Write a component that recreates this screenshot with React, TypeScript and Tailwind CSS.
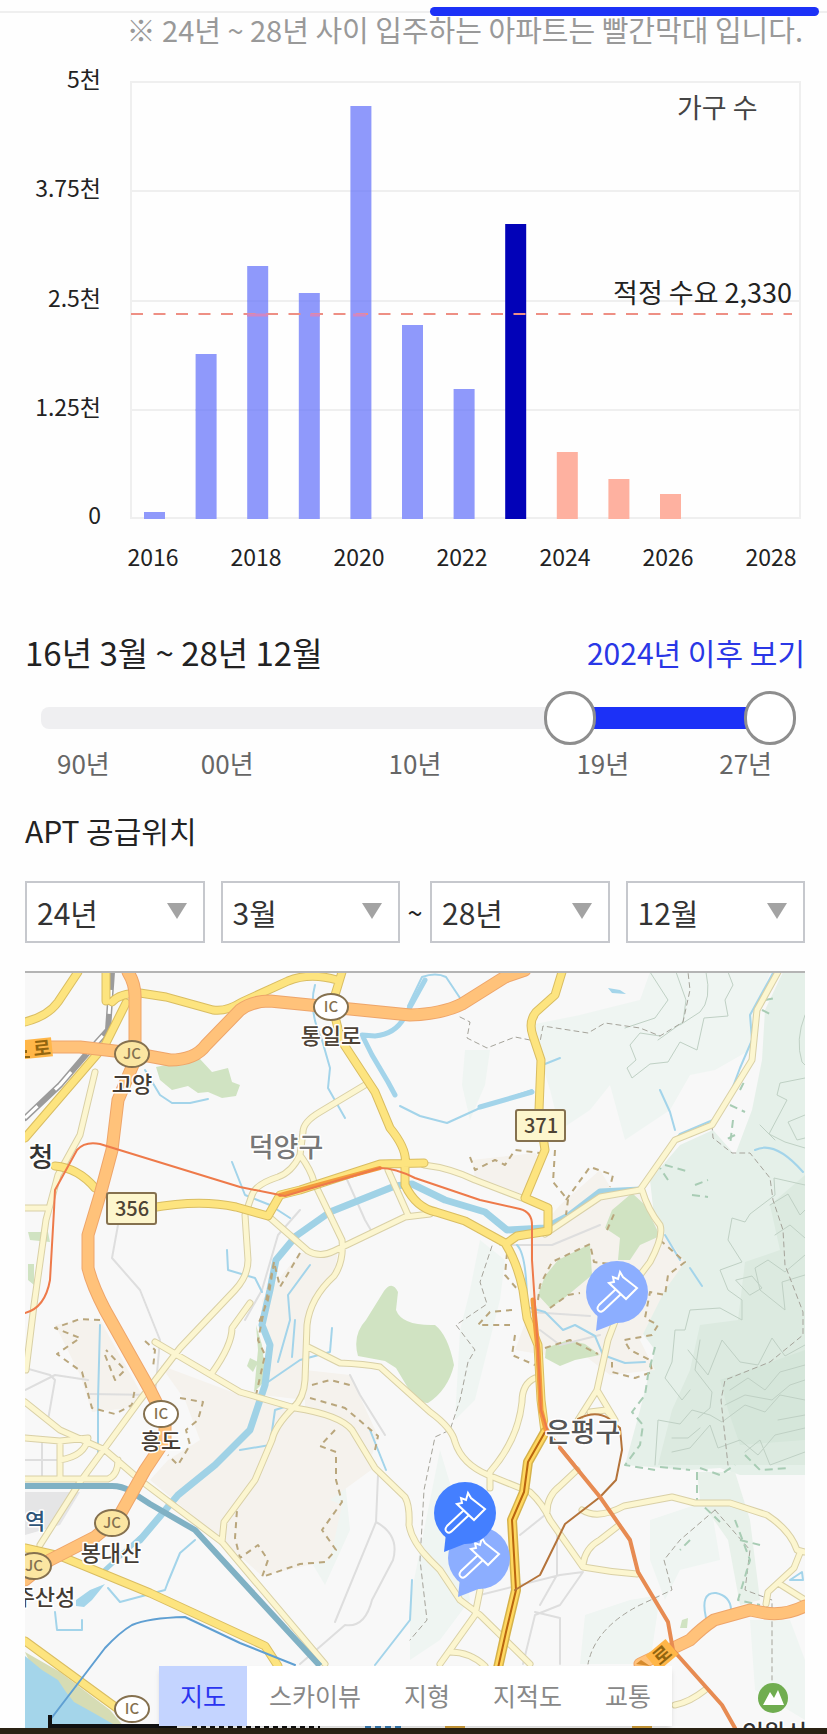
import { useState } from "react";

const bars = [
  { year: 2016, top: 512, fill: "#8f99fb" },
  { year: 2017, top: 354, fill: "#8f99fb" },
  { year: 2018, top: 266, fill: "#8f99fb" },
  { year: 2019, top: 293, fill: "#8f99fb" },
  { year: 2020, top: 106, fill: "#8f99fb" },
  { year: 2021, top: 325, fill: "#8f99fb" },
  { year: 2022, top: 389, fill: "#8f99fb" },
  { year: 2023, top: 224, fill: "#0202b8" },
  { year: 2024, top: 452, fill: "#feb1a0" },
  { year: 2025, top: 479, fill: "#feb1a0" },
  { year: 2026, top: 494, fill: "#feb1a0" },
];

const yTicks = [
  { y: 82, label: "5천" },
  { y: 191, label: "3.75천" },
  { y: 301, label: "2.5천" },
  { y: 410, label: "1.25천" },
  { y: 518, label: "0" },
];

const xTicks = [2016, 2018, 2020, 2022, 2024, 2026, 2028];

function SupplyChart() {
  return (
    <svg viewBox="0 46 827 582" className="block w-full h-auto" role="img" aria-label="가구 수">
      <rect x="131" y="82" width="669" height="436" fill="none" stroke="#efefef" strokeWidth="2" />
      {yTicks.map((t) => (
        <g key={t.label}>
          <line x1="131" x2="800" y1={t.y} y2={t.y} stroke="#efefef" strokeWidth="2" />
          <text x="101" y={t.y + 6} textAnchor="end" fontSize="23" fill="#222">
            {t.label}
          </text>
        </g>
      ))}
      {bars.map((b, i) => (
        <rect key={b.year} x={144 + i * 51.6} y={b.top} width="21" height={519 - b.top} fill={b.fill} />
      ))}
      {/* grid shows faintly through the light bars */}
      <g stroke="#7d88ea" strokeWidth="1" opacity="0.4">
        <path d="M351 191h20M247 301h21M299 301h21M351 301h20M195 410h22M247 410h21M299 410h21M351 410h20M403 410h20M454 410h21" />
      </g>
      <line x1="131" x2="792" y1="314" y2="314" stroke="#ee8f84" strokeWidth="2" strokeDasharray="12 10.5" />
      <path d="M247 315H268M310 315H320M353 315H366" stroke="#cf86c6" strokeWidth="3" />
      <text x="677" y="118" fontSize="27" fill="#444">
        가구 수
      </text>
      <text x="792" y="303" textAnchor="end" fontSize="27" fill="#222">
        적정 수요 2,330
      </text>
      {xTicks.map((year, i) => (
        <text key={year} x={153 + i * 103} y="566" textAnchor="middle" fontSize="23" fill="#222">
          {year}
        </text>
      ))}
    </svg>
  );
}

const thumb =
  "pointer-events-none absolute inset-0 m-0 h-[54px] w-full appearance-none bg-transparent [&::-webkit-slider-thumb]:pointer-events-auto [&::-webkit-slider-thumb]:h-[54px] [&::-webkit-slider-thumb]:w-[52px] [&::-webkit-slider-thumb]:appearance-none [&::-webkit-slider-thumb]:rounded-full [&::-webkit-slider-thumb]:border-3 [&::-webkit-slider-thumb]:border-[#8e8e8e] [&::-webkit-slider-thumb]:bg-white";

function YearRange() {
  const [from, setFrom] = useState(143);
  const [to, setTo] = useState(200);

  return (
    <div className="pl-4 pr-[9px]">
      <div className="relative flex h-[54px] items-center">
        <div className="h-[22px] w-full overflow-hidden rounded-lg bg-[#efeff1] px-[26px]">
          <div
            className="h-full bg-[#1c31f7]"
            style={{ marginLeft: `${from / 2}%`, width: `${(to - from) / 2}%` }}
          />
        </div>
        <input type="range" aria-label="시작" min={0} max={200} value={from} onChange={(e) => setFrom(Number(e.target.value))} className={thumb} />
        <input type="range" aria-label="끝" min={0} max={200} value={to} onChange={(e) => setTo(Number(e.target.value))} className={thumb} />
      </div>
      <div className="grid grid-cols-[144fr_188fr_188fr_143fr_auto] pl-4 pr-6 text-[26px] leading-9 text-[#666]">
        <span>90년</span>
        <span>00년</span>
        <span>10년</span>
        <span>19년</span>
        <span>27년</span>
      </div>
    </div>
  );
}

function Picker({ label, value, options }: { label: string; value: string; options: string[] }) {
  return (
    <div className="relative min-w-0 flex-1">
      <select
        aria-label={label}
        defaultValue={value}
        className="h-[62px] w-full appearance-none border-2 border-[#c6c8cd] bg-white pl-[10px] text-[30px] text-[#333]"
      >
        {options.map((o) => (
          <option key={o}>{o}</option>
        ))}
      </select>
      <svg viewBox="0 0 20 16" className="pointer-events-none absolute right-[18px] top-[22px] h-4 w-5">
        <path d="M0 0H20L10 16Z" fill="#a3a3a3" />
      </svg>
    </div>
  );
}

const years = ["24년", "25년", "26년", "27년", "28년"];
const months = ["1월", "2월", "3월", "4월", "5월", "6월", "7월", "8월", "9월", "10월", "11월", "12월"];

/* ---------- map ---------- */

const paleRoads = [
  "M365 1085L320 1112Q303 1122 303 1132L300 1155Q292 1172 278 1177Q256 1184 252 1195L245 1215L248 1260Q248 1276 235 1290L180 1348L140 1400L80 1482L40 1545",
  "M300 1155Q311 1170 314 1182L342 1240Q344 1262 334 1276Q310 1298 307 1325L305 1380Q304 1398 293 1408Q275 1426 272 1440L255 1480L224 1522L222 1542",
  "M268 1216L308 1251Q320 1258 334 1251L405 1217L430 1214",
  "M388 1170L408 1215",
  "M95 1072L80 1135L58 1175L46 1220L34 1305L26 1370",
  "M25 1208H46",
  "M155 1342L240 1392L295 1408Q340 1415 352 1430L375 1468L405 1497Q410 1506 409 1525Q412 1542 430 1560L440 1570L460 1600L480 1615L530 1664",
  "M308 1347L340 1363Q365 1364 380 1367L430 1412Q452 1428 455 1442Q462 1464 488 1475L530 1492Q543 1504 550 1520L583 1567Q610 1572 637 1574",
  "M250 1303L232 1328Q232 1345 212 1373",
  "M25 1402L60 1430L105 1450L140 1480L222 1542L325 1664",
  "M25 1438L60 1441L88 1438Q85 1456 60 1460M60 1441V1478M25 1479H108Q118 1475 118 1460",
  "M424 1165Q450 1168 475 1180L522 1198",
  "M545 1234L600 1197L640 1190L675 1140L712 1125L752 1060L757 1010L778 972",
  "M642 1190Q648 1210 660 1225Q664 1236 650 1262L625 1295L608 1340L597 1390L578 1420",
  "M597 1390L615 1420L606 1410L590 1412",
  "M535 1378Q522 1384 522 1402Q518 1440 490 1472L490 1488",
  "M547 1512Q547 1496 560 1486L577 1470",
  "M582 1510Q598 1520 624 1506L672 1497L695 1503L730 1503L767 1515Q790 1530 797 1550L805 1552M800 1553L794 1568L768 1592L766 1604",
  "M583 1565Q585 1548 600 1540L618 1526",
  "M480 1590L475 1615L440 1664M450 1652Q470 1652 485 1666",
  "M778 1583L805 1600",
  "M675 1705Q690 1702 705 1690",
];

const yellowRoads = [
  "M25 1022Q48 1016 58 1002L78 972",
  "M106 972V1001",
  "M112 1002Q120 993 140 993L166 997L213 1010Q226 1012 242 1002L288 981Q310 972 337 980",
  "M126 1003L105 1045L25 1138",
  "M55 1166Q78 1168 95 1188",
  "M150 1208Q200 1199 236 1207L268 1216L280 1195L300 1190L380 1164L424 1163",
  "M342 972L332 1005L341 1040L375 1092L390 1128Q408 1150 405 1165V1185Q416 1208 436 1212L465 1221L505 1243Q517 1262 523 1290L527 1318L538 1345L541 1400L545 1432",
  "M562 972L555 995L536 1012Q528 1022 533 1036L541 1060L539 1110L545 1150L525 1198L548 1208V1231L517 1236L507 1243",
  "M25 1548L60 1556L150 1593L265 1646L278 1666",
  "M25 1641L125 1714",
];

const highways = [
  "M128 972Q136 985 135 1000V1060L118 1100L112 1150L100 1195L88 1235V1268Q92 1285 105 1310L150 1390L165 1420V1440L145 1470L118 1518L95 1537L50 1560L25 1580",
  "M25 1047H80L132 1053L170 1060Q195 1060 206 1045L240 1010Q252 1001 270 1001L330 1007L410 1015Q442 1014 462 1004L505 977L525 970",
  "M805 1606Q785 1616 765 1613L750 1610L714 1620Q702 1628 690 1640L640 1664",
];

const streams = [
  "M773 973L750 1015L752 1040L740 1068L728 1100L713 1120L680 1134L660 1158L641 1187",
  "M315 985Q308 1010 322 1040L330 1068L328 1088L345 1118",
  "M408 1006L422 977Q436 972 446 977L464 1004",
  "M145 1070L160 1095L172 1103H190L208 1099",
  "M400 1106L420 1116L447 1123L480 1108L532 1090M545 1064L560 1058",
  "M227 1250L228 1270L255 1278L262 1292M232 1162L245 1195L270 1205L290 1218",
  "M100 1325L98 1400V1460",
  "M268 1382L300 1360L330 1352L332 1328M310 1265L288 1295L290 1320L278 1362M292 1357L295 1320",
  "M517 1245Q527 1255 527 1307L545 1312L563 1330L575 1325L595 1336L603 1355L625 1363L645 1362",
  "M55 1612L57 1630H82V1620M195 1540L180 1553L168 1582L165 1590L120 1602L108 1588",
  "M665 1235L680 1260M690 1268L702 1286M660 1090L670 1112L675 1130",
  "M755 1150Q775 1140 803 1172",
  "M375 1665L410 1620L412 1580M706 1618Q700 1592 716 1593Q730 1596 731 1609M790 1580L802 1572L803 1580Z",
  "M240 1450L270 1445L275 1410L300 1402M370 1430L386 1470",
];

const contours = [
  "M650 972L668 1000L655 1018L625 1028",
  "M676 972L686 1000L683 1022L658 1040M706 972Q712 1000 700 1012L680 1025M728 972L733 985L725 1000L728 1016L704 1018L697 1050L680 1042L668 1062L650 1064L632 1078L627 1068L636 1060L630 1045L640 1033L660 1036",
  "M805 1015Q795 1040 802 1062L805 1065M805 1078L780 1083L777 1095L787 1100L769 1134L785 1142L805 1148M805 1115L788 1122L797 1140L805 1138M760 1125L775 1140",
  "M805 1185L774 1178L775 1195L750 1214L745 1222L732 1218L728 1240L742 1262L720 1270L728 1290L742 1300V1320L720 1308L690 1310L685 1330L675 1330L672 1362L665 1378L682 1400L690 1390",
  "M805 1255L785 1272L768 1260L755 1268L760 1290L785 1310L782 1282L805 1275M736 1280L752 1276L762 1288L750 1295Z",
  "M688 1350L708 1375L722 1340L740 1362L758 1365L772 1338L785 1356L805 1345",
  "M730 1390L748 1378L765 1390L780 1372L805 1365M725 1405L745 1395L772 1400L790 1385L805 1380M700 1340L695 1370L712 1392L710 1408L698 1418",
  "M655 1465L658 1420L680 1424L692 1410L710 1415L722 1422L745 1405L765 1412L780 1395L805 1400M672 1452L690 1448L710 1425L718 1448L740 1440L758 1455L775 1435L805 1428",
  "M672 1438H688L700 1428M745 1452L760 1440L770 1465L805 1452M778 1420L805 1415",
  "M770 1205L788 1194L800 1215L805 1210M775 1235L790 1225L805 1238",
];

const trails = [
  "M460 1017L470 1022L467 1038L487 1048L515 1037L540 1042L543 1026L588 1033L605 1023L640 1028L660 1036L683 1022L690 990L688 972",
  "M712 1125L713 1138L732 1153H750L770 1178L773 1200L783 1230L785 1265L803 1312L803 1335L770 1362L725 1380L721 1400L728 1465",
  "M492 1246L480 1282L487 1304L456 1325L475 1350L468 1362L460 1400L450 1430L435 1437L424 1490L420 1560L427 1620L410 1640",
  "M715 1510L680 1540L664 1560L672 1590L640 1605Q595 1628 588 1664M715 1510L750 1550L745 1590L772 1600V1680",
];

const districts = [
  "M100 1320L80 1319L55 1328L80 1338L57 1354L82 1372L92 1408L115 1414L132 1405L135 1388M105 1355L115 1380L125 1370L106 1350",
  "M145 1341L155 1350L153 1368M180 1398L203 1402L198 1420L186 1430L190 1445L178 1465L168 1455",
  "M300 1253L280 1287L274 1262L268 1300L258 1325M274 1262L258 1340L265 1355L256 1395",
  "M310 1398L345 1408L378 1436L375 1450M312 1385L330 1380L350 1385M335 1430L320 1446L336 1452V1480L342 1502L322 1530L336 1550L325 1562L300 1564L262 1577L268 1560L258 1545L240 1558L235 1538L237 1510",
  "M470 1157L475 1170L495 1160L505 1165L515 1150L540 1153M555 1150L553 1182L568 1200L566 1215M566 1200L590 1167L613 1175L610 1187",
  "M507 1253L505 1275L518 1290M512 1310L490 1312L478 1325L510 1325M515 1335L512 1355L535 1365M538 1300L540 1285L552 1262L590 1244L594 1262L610 1264M607 1230L615 1212M660 1240L685 1262L668 1275L665 1295L650 1292L645 1318L658 1325L652 1335L624 1340L630 1350L650 1360L652 1372L635 1378L612 1372V1362",
  "M545 1348L570 1340L598 1354M550 1308L568 1295L580 1293",
];

const trees = [
  "M765 1000L775 998M762 1010L770 1014M740 1090L745 1080M730 1105L745 1112M733 1120L730 1145M735 1135L725 1140M665 1165L690 1172M668 1180L660 1168M695 1185L708 1180M692 1195L708 1197",
  "M655 1347L648 1375L645 1395L632 1412L643 1425L640 1445L625 1465L655 1470M660 1467L690 1470M700 1468L720 1475L735 1465M745 1455L760 1470L790 1468",
  "M697 1472V1500L720 1522M735 1520L750 1560L738 1600L760 1605M740 1540L760 1545M690 1540L680 1550",
];

const minorRoads = [
  "M118 1225L112 1258L140 1290L160 1340L155 1395L90 1394M25 1368L50 1375L55 1380L48 1420M25 1390L55 1375L88 1380",
  "M300 1210L278 1235L262 1290L245 1320M345 1175L365 1220L372 1232M500 1245L552 1245L600 1225M530 1312L590 1316M540 1330L560 1345L600 1335",
  "M378 1475L376 1522Q400 1535 393 1560L372 1600Q365 1628 345 1625L300 1664M376 1522L335 1622",
  "M480 1595L560 1575L583 1572L560 1605L535 1615L523 1664M535 1612L560 1618V1664M557 1530V1575L540 1605M520 1535L545 1515",
  "M42 1440V1478M25 1460H60M350 1375L360 1395L385 1435",
];

const markers = [
  { kind: "IC", x: 331, y: 1007 },
  { kind: "JC", x: 132, y: 1054 },
  { kind: "IC", x: 161, y: 1414 },
  { kind: "JC", x: 112, y: 1523 },
  { kind: "JC", x: 34, y: 1566 },
  { kind: "IC", x: 132, y: 1709 },
];

const places = [
  { name: "통일로", x: 331, y: 1044, size: 22, fill: "#4d4236" },
  { name: "고양", x: 132, y: 1092, size: 22, fill: "#443c34" },
  { name: "흥도", x: 161, y: 1449, size: 22, fill: "#443c34" },
  { name: "봉대산", x: 111, y: 1561, size: 22, fill: "#443c34" },
  { name: "주산성", x: 45, y: 1605, size: 22, fill: "#443c34" },
  { name: "역", x: 35, y: 1529, size: 22, fill: "#2d5578" },
  { name: "청", x: 41, y: 1167, size: 27, fill: "#333" },
  { name: "덕양구", x: 286, y: 1157, size: 27, fill: "#777" },
  { name: "은평구", x: 583, y: 1442, size: 27, fill: "#555" },
  { name: "인왕산", x: 775, y: 1742, size: 24, fill: "#333" },
];

function Roads({ paths, width, fill, edge }: { paths: string[]; width: number; fill: string; edge: string }) {
  const d = paths.join("");
  return (
    <>
      <path d={d} stroke={edge} strokeWidth={width + 2} />
      <path d={d} stroke={fill} strokeWidth={width} />
    </>
  );
}

function Pin({ x, y, fill }: { x: number; y: number; fill: string }) {
  return (
    <g transform={`translate(${x} ${y})`}>
      <path d="M-21 39L-19 20L2 30Z" fill={fill} />
      <circle r="31" fill={fill} />
      <g fill="none" stroke="#fff" strokeWidth="2" strokeLinejoin="miter">
        <path d="M-8 -9L-3 -10L-4 -15L1 -13L3 -20L6 -15L20 -4L9 7Z" />
        <path d="M-1 -3L-18 13Q-21 17 -18 19Q-16 21 -13 18L4 2" />
      </g>
    </g>
  );
}

function AreaMap() {
  return (
    <svg viewBox="25 971 780 757" className="block w-full h-auto" role="img" aria-label="APT 공급위치 지도">
      <rect x="25" y="971" width="780" height="757" fill="#f8f8f8" />

      {/* hills */}
      <path fill="#eff5f2" d="M530 1025L580 1015L640 1000L650 972H770L757 1010L750 1050L715 1070L690 1075L670 1110L625 1140L610 1085L590 1110L560 1130L550 1090ZM465 1050L490 1050L485 1085L470 1120L462 1085ZM480 1240L505 1260L500 1300L475 1400L455 1420L460 1330L470 1290ZM440 1450L455 1500L470 1600L440 1640L410 1660V1600ZM585 1615L630 1600L660 1595L650 1664H580ZM650 1520L710 1500L720 1560L680 1570L665 1600L650 1560ZM750 1620L790 1620L805 1660V1720L755 1690ZM310 1490L345 1480L350 1530L325 1585L310 1560Z" />
      <path fill="#e5f0e9" d="M783 972H805V1475H740L720 1468L690 1470L625 1465L640 1410L655 1350L640 1330L665 1290L680 1262L655 1225L650 1180L680 1145L713 1130L735 1155L752 1110L762 1060L765 1010Z" />
      <path fill="#dceae0" d="M805 1175L770 1205L780 1250L745 1262L738 1320L700 1325L690 1370L672 1410L658 1465H805Z" />
      <path fill="#d5e6da" d="M720 1380L805 1350V1440L740 1445L728 1410Z" />
      <path fill="#e8f1ea" d="M697 1472H735L750 1520L760 1600L740 1605L728 1540L700 1500Z" />

      {/* built-up areas */}
      <path fill="#f5f2ed" d="M55 1325L80 1320H100L145 1400L130 1408L92 1412L80 1375ZM160 1365L240 1395L300 1410L350 1428L378 1465L330 1500L342 1505L330 1560L262 1576L222 1540L150 1480L168 1460L200 1440L185 1400ZM300 1253L338 1250L334 1276L308 1310L305 1400L262 1395L268 1340L262 1300ZM305 1370L350 1375L378 1436L372 1455L305 1410ZM472 1160L535 1153L545 1160L525 1195L475 1178ZM530 1240L560 1205L600 1170L612 1190L645 1195L665 1235L685 1262L665 1290L640 1340L655 1370L610 1375L580 1352L545 1355L515 1350L530 1310Z" />
      <path fill="#e5e5e6" d="M25 1492H80L60 1525L25 1535Z" />

      {/* parks */}
      <path fill="#d0e3c2" d="M156 1067L175 1063L200 1059L212 1072L228 1068L232 1082L240 1085L236 1096L222 1098L208 1092L198 1093L188 1086L172 1090L160 1080ZM384 1291Q392 1280 398 1292L396 1310Q402 1326 435 1325Q448 1335 454 1365Q448 1390 428 1403Q418 1404 408 1388L396 1368L385 1361L358 1356Q352 1335 366 1320ZM612 1210L618 1205L632 1193L645 1205L660 1236L640 1245L630 1260H618L620 1238L605 1228ZM590 1244L592 1275L562 1300L550 1308L538 1295L545 1276L558 1260L572 1253ZM546 1348L568 1340L585 1344L600 1355L575 1360L560 1366L545 1358ZM28 1232L48 1232L50 1242L30 1240ZM28 1264H34V1285L28 1280ZM250 1358L258 1362L253 1372L247 1366ZM256 1325L262 1345L266 1380L254 1392L258 1350ZM682 1620L688 1618L687 1628L680 1628Z" />

      {/* water */}
      <path fill="#d6dcb4" d="M25 1652L60 1672L110 1710L125 1728H60Z" />
      <path fill="#a4d5ea" d="M25 1656L42 1670L58 1680L66 1692L74 1702L92 1712L120 1728H25ZM76 1600L90 1590L105 1584L92 1600L84 1607L76 1606ZM608 988L620 990L626 994L612 993Z" />

      <g fill="none" strokeLinejoin="round" strokeLinecap="round">
        <path d={contours.join("")} stroke="#bfd0c4" strokeWidth="1" />
        <path d={minorRoads.join("")} stroke="#dedede" strokeWidth="2" />
        <path d={streams.join("")} stroke="#a3d4ea" strokeWidth="2" />
        <path d="M425 980L404 1018Q395 1034 375 1036L362 1035L372 1055L388 1082L395 1095M480 1107L532 1092" stroke="#a3d4ea" strokeWidth="5" />
        <path d="M641 1190L600 1192L570 1215L545 1228L507 1230L485 1212L445 1200L412 1184L395 1186L330 1212L296 1236L276 1260L270 1290L262 1325L270 1345L265 1385L250 1430L215 1465L178 1495L140 1540" stroke="#a0d2e6" strokeWidth="7" />
        <path d="M140 1538L105 1570" stroke="#a0d2e6" strokeWidth="5" />
        <path d={trails.join("")} stroke="#a5a39a" strokeWidth="1" strokeDasharray="5 4" />
        <path d={districts.join("")} stroke="#b9a67c" strokeWidth="2" strokeDasharray="6 5" strokeLinecap="butt" />
        <path d={trees.join("")} stroke="#a8ccb4" strokeWidth="2" strokeDasharray="8 5" strokeLinecap="butt" />

        <Roads paths={paleRoads} width={5} fill="#fcf6d0" edge="#d9d0a6" />
        <path d="M25 1486H112Q122 1486 130 1491L150 1504L195 1530L250 1590L320 1666" stroke="#80b1c4" strokeWidth="6" strokeLinecap="butt" />
        <path d="M112 972L108 1030L90 1050L60 1085L25 1118" stroke="#9b9b9b" strokeWidth="6" />
        <path d="M112 972L108 1030L90 1050L60 1085L25 1118" stroke="#fff" strokeWidth="3" strokeDasharray="24 24" strokeDashoffset="30" strokeLinecap="butt" />
        <Roads paths={yellowRoads} width={7} fill="#fde47f" edge="#d9bd62" />
        <Roads paths={highways} width={11} fill="#ffc27a" edge="#eea56a" />

        <path d="M545 1432L528 1462L524 1492L512 1520L516 1590L506 1632L498 1668" stroke="#d5b24c" strokeWidth="10" />
        <path d="M545 1432L528 1462L524 1492L512 1520L516 1590L506 1632L498 1668" stroke="#ffd860" strokeWidth="7" />
        <path d="M545 1432L528 1462L524 1492L512 1520L516 1590L506 1632L498 1668" stroke="#b9650f" strokeWidth="2" />
        <path d="M515 1590L540 1575L565 1524L600 1497L616 1480L622 1450L620 1428L608 1418Q595 1410 578 1419" stroke="#b4733a" strokeWidth="2" />
        <path d="M280 1195L380 1168" stroke="#f39a3c" strokeWidth="4" />
        <path d="M533 1300L538 1350L541 1410L546 1430" stroke="#f39a3c" strokeWidth="5" />
        <path d="M25 1313Q45 1308 50 1280L54 1210L55 1190L77 1150Q85 1141 100 1144L240 1187L285 1196L380 1168Q395 1168 415 1178L480 1200L520 1209Q532 1212 532 1225V1260L538 1350L541 1410L548 1432L575 1465L600 1497L630 1540L638 1572L668 1622L673 1650L722 1705L735 1728" stroke="#ee7a4a" strokeWidth="2" />
        <path d="M560 1448L600 1497L630 1540L638 1572L668 1622L673 1650L722 1705L735 1728" stroke="#e78b52" strokeWidth="4" />
        <path d="M50 1720L105 1648Q120 1632 132 1625Q148 1618 185 1617L240 1643L295 1665" stroke="#5f9fd2" strokeWidth="2" />
      </g>

      {/* road name tags */}
      <g fontSize="19" fontWeight="700" fill="#92650f" textAnchor="middle">
        <rect x="15" y="1039" width="37" height="19" fill="#ffb648" transform="rotate(-6 35 1048)" />
        <text x="42" y="1055" transform="rotate(-6 42 1048)">로</text>
        <path d="M25 1057H30M26 1050V1053" stroke="#92650f" strokeWidth="2" />
        <rect x="649" y="1645" width="26" height="20" fill="#ffb648" transform="rotate(-40 662 1655)" />
        <text x="662" y="1662" transform="rotate(-40 662 1655)">로</text>
        <path d="M636 1664L641 1660L650 1666Z" fill="#d68a2c" />
      </g>

      {markers.map((m) => (
        <g key={`${m.x}-${m.y}`}>
          <ellipse cx={m.x} cy={m.y} rx="17" ry="13" fill={m.kind === "IC" ? "#fff" : "#fbe6a2"} stroke="#85714f" strokeWidth="2" />
          <text x={m.x} y={m.y + 5} textAnchor="middle" fontSize="15" fontWeight="500" fill="#85714f">
            {m.kind}
          </text>
        </g>
      ))}

      {[
        { no: "356", x: 107, y: 1193 },
        { no: "371", x: 516, y: 1110 },
      ].map((s) => (
        <g key={s.no}>
          <rect x={s.x} y={s.y} width="49" height="31" rx="2" fill="#fdf6cd" stroke="#85714f" strokeWidth="2" />
          <text x={s.x + 25} y={s.y + 23} textAnchor="middle" fontSize="20" fontWeight="500" fill="#4d4334">
            {s.no}
          </text>
        </g>
      ))}

      <g textAnchor="middle" fontWeight="500" stroke="#fff" strokeWidth="3" strokeLinejoin="round" style={{ paintOrder: "stroke" }}>
        {places.map((p) => (
          <text key={p.name} x={p.x} y={p.y} fontSize={p.size} fill={p.fill}>
            {p.name}
          </text>
        ))}
      </g>

      <circle cx="773" cy="1698" r="15" fill="#70ad50" />
      <path d="M763 1705L770 1692L774 1698L778 1690L784 1705Z" fill="#fff" />

      <Pin x={617} y={1292} fill="#8caeff" />
      <Pin x={479} y={1558} fill="#8caeff" />
      <Pin x={465} y={1513} fill="#447fff" />

      {/* scale bar */}
      <path d="M50 1715V1726H177" fill="none" stroke="#111" strokeWidth="4" />
      <path d="M192 1727H320" stroke="#111" strokeWidth="2" strokeDasharray="5 4" />
      <path d="M365 1727H405" stroke="#3a7fb8" strokeWidth="2" strokeDasharray="6 4" />
      <path d="M445 1727H465M632 1727H652" stroke="#d8a43c" strokeWidth="2" />
      <path d="M25 972H805" stroke="#b4b4b4" strokeWidth="2" />
    </svg>
  );
}

const mapTypes = ["지도", "스카이뷰", "지형", "지적도", "교통"];

export default function App() {
  const [mapType, setMapType] = useState("지도");

  return (
    <main className="bg-[#fefefe] font-['Noto_Sans_CJK_KR',sans-serif] text-[#222]">
      <div className="relative h-[13px] border-b-2 border-[#efefef]">
        <div className="absolute right-2 top-[7px] h-[9px] w-[47%] rounded-full bg-[#1c31f7]" />
      </div>
      <p className="h-[33px] pr-6 text-right text-[29px] leading-[33px] text-[#999]">
        ※ 24년 ~ 28년 사이 입주하는 아파트는 빨간막대 입니다.
      </p>
      <SupplyChart />

      <div className="pl-[25px] pr-[22px]">
        <div className="flex items-center justify-between leading-[48px]">
          <h2 className="text-[33px]">16년 3월 ~ 28년 12월</h2>
          <button className="text-[30px] text-[#2a37e6]">2024년 이후 보기</button>
        </div>
        <div className="mt-[15px]">
          <YearRange />
        </div>

        <h2 className="mt-[29px] text-[30px] leading-10">APT 공급위치</h2>
        <div className="mt-[31px] flex items-center">
          <div className="flex flex-1 gap-4">
            <Picker label="시작 연도" value="24년" options={years} />
            <Picker label="시작 월" value="3월" options={months} />
          </div>
          <span className="w-[30px] text-center text-[27px]">~</span>
          <div className="flex flex-1 gap-4">
            <Picker label="종료 연도" value="28년" options={years} />
            <Picker label="종료 월" value="12월" options={months} />
          </div>
        </div>

        <div className="relative mt-7">
          <AreaMap />
          <div className="absolute bottom-[2px] left-[134px] flex gap-px bg-white shadow-md">
            {mapTypes.map((t) => (
              <button
                key={t}
                onClick={() => setMapType(t)}
                className={
                  t === mapType
                    ? "h-[60px] bg-[#c4d4ff] px-[21px] text-[25px] text-[#2b35f0]"
                    : "h-[60px] px-[21px] text-[25px] text-[#888]"
                }
              >
                {t}
              </button>
            ))}
          </div>
        </div>
      </div>
      <div className="h-[6px] bg-[#2a2214]" />
    </main>
  );
}
